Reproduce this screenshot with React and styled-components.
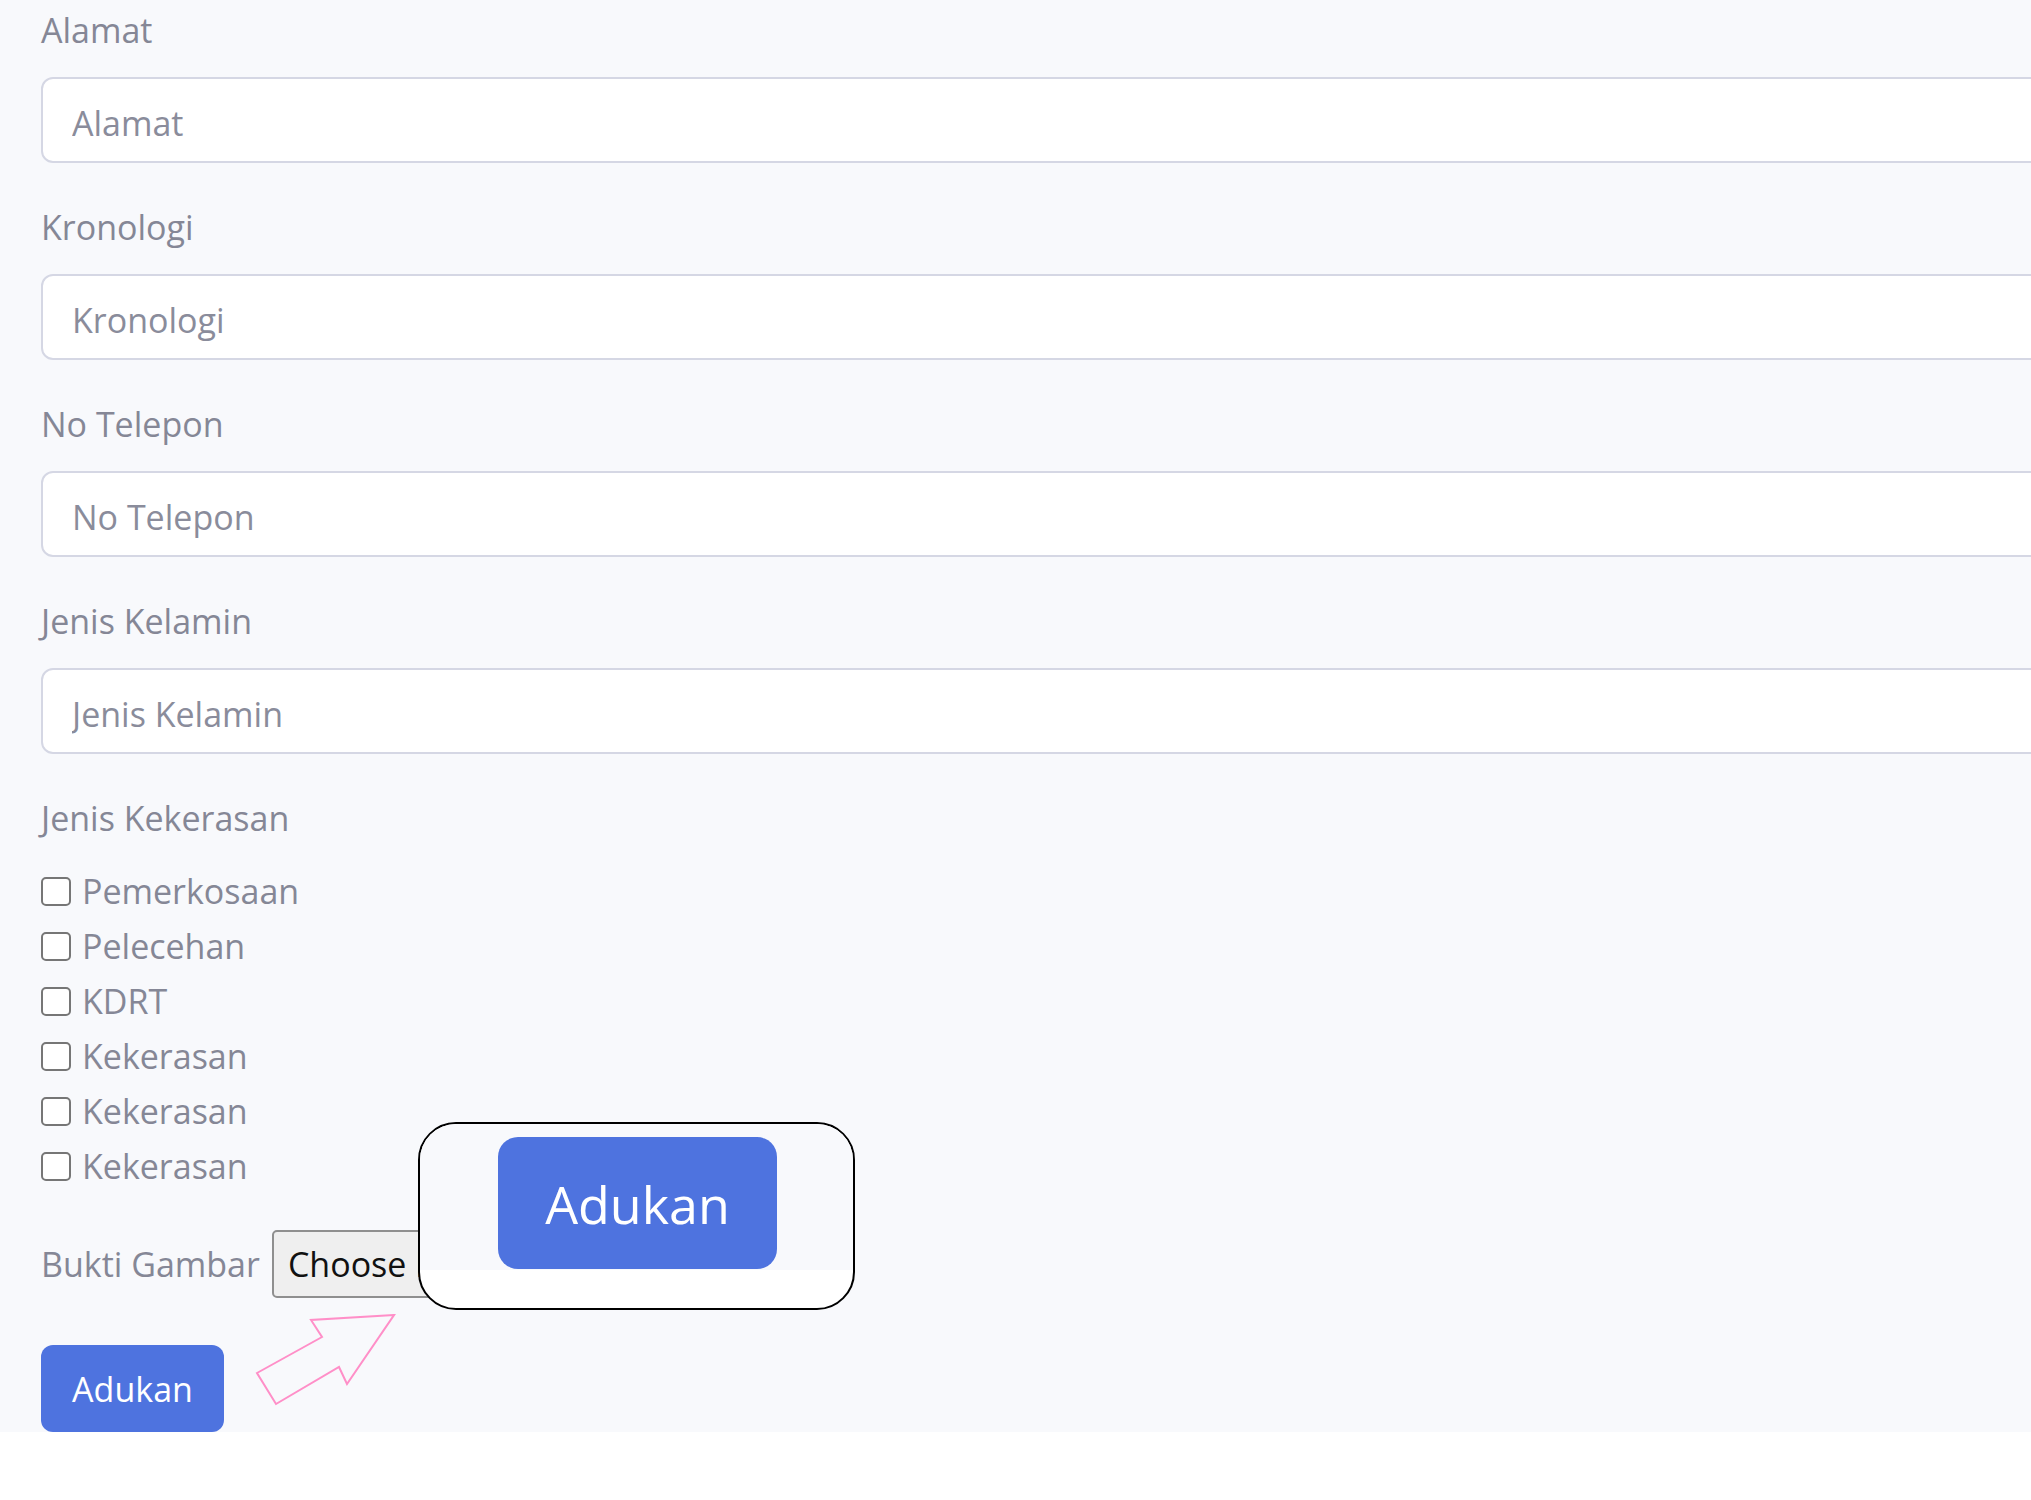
import React from "react";
import styled, { createGlobalStyle } from "styled-components";

const Global = createGlobalStyle`
  html, body { margin: 0; padding: 0; background: #ffffff; }
  body { font-family: "Open Sans", "Noto Sans", sans-serif; }
  * { box-sizing: border-box; }
`;

const Page = styled.div`
  position: relative;
  width: 2031px;
  overflow: hidden;
  background: #f8f9fc;
  padding: 10px 0 0 41px;
`;

const Group = styled.div`
  display: flex;
  flex-direction: column;
  margin-bottom: 44px;
`;

const Label = styled.label`
  display: block;
  font-size: 34px;
  line-height: 41px;
  color: #858796;
  margin-bottom: ${(p) => p.$gap ?? 26}px;
`;

const Input = styled.input`
  display: block;
  width: calc(100% + 60px);
  height: 86px;
  border: 2px solid #d5d7e4;
  border-radius: 12px;
  background: #ffffff;
  padding: 5px 29px 0;
  font-family: inherit;
  font-size: 34px;
  color: #6e707e;
  outline: none;
  &::placeholder { color: #8a8c9b; }
`;

const CheckList = styled.div`
  display: flex;
  flex-direction: column;
`;

const CheckRow = styled.label`
  display: flex;
  align-items: center;
  height: 55px;
  gap: 11px;
  font-size: 34px;
  line-height: 41px;
  color: #858796;
`;

const Box = styled.input`
  appearance: none;
  margin: 0;
  width: 30px;
  height: 29px;
  border: 2px solid #767676;
  border-radius: 5px;
  background: #ffffff;
  flex: none;
`;

const FileRow = styled.div`
  display: flex;
  align-items: center;
  gap: 12px;
  margin-top: 36px;
  height: 68px;
`;

const FileButton = styled.button`
  height: 68px;
  padding: 0 14px;
  border: 2px solid #8f8f8f;
  border-radius: 5px;
  background: #efefef;
  font-family: inherit;
  font-size: 34px;
  color: #111111;
  white-space: nowrap;
`;

const Submit = styled.button`
  margin-top: 47px;
  display: block;
  height: ${(p) => (p.$big ? 132 : 87)}px;
  width: ${(p) => (p.$big ? 279 : 183)}px;
  border: none;
  border-radius: ${(p) => (p.$big ? 20 : 12)}px;
  background: #4e73df;
  color: #ffffff;
  font-family: inherit;
  font-size: ${(p) => (p.$big ? 52 : 34)}px;
  padding: 0;
`;

const Callout = styled.div`
  position: absolute;
  left: 418px;
  top: 1122px;
  width: 437px;
  height: 188px;
  border: 2.5px solid #000000;
  border-radius: 38px;
  overflow: hidden;
  background: #ffffff;
`;

const CalloutBg = styled.div`
  height: 146px;
  background: #f8f9fc;
  padding: 13px 0 0 78px;
  & > button { margin-top: 0; }
`;

const Arrow = styled.svg`
  position: absolute;
  left: 0;
  top: 0;
  pointer-events: none;
`;

const fields = ["Alamat", "Kronologi", "No Telepon", "Jenis Kelamin"];
const kinds = ["Pemerkosaan", "Pelecehan", "KDRT", "Kekerasan", "Kekerasan", "Kekerasan"];

export default function App() {
  return (
    <>
      <Global />
      <Page>
        {fields.map((f) => (
          <Group key={f}>
            <Label>{f}</Label>
            <Input placeholder={f} />
          </Group>
        ))}
        <Label $gap={25}>Jenis Kekerasan</Label>
        <CheckList>
          {kinds.map((k, i) => (
            <CheckRow key={i}>
              <Box type="checkbox" />
              {k}
            </CheckRow>
          ))}
        </CheckList>
        <FileRow>
          <Label $gap={0}>Bukti Gambar</Label>
          <FileButton>Choose File</FileButton>
        </FileRow>
        <Submit>Adukan</Submit>
        <Callout>
          <CalloutBg>
            <Submit $big>Adukan</Submit>
          </CalloutBg>
        </Callout>
        <Arrow width="2031" height="1500" viewBox="0 0 2031 1500">
          <polygon
            points="394,1315 311,1320 322,1337 257,1373 276,1404 339,1367 347,1384"
            fill="none"
            stroke="#ff8fc8"
            strokeWidth="2"
          />
        </Arrow>
      </Page>
    </>
  );
}
